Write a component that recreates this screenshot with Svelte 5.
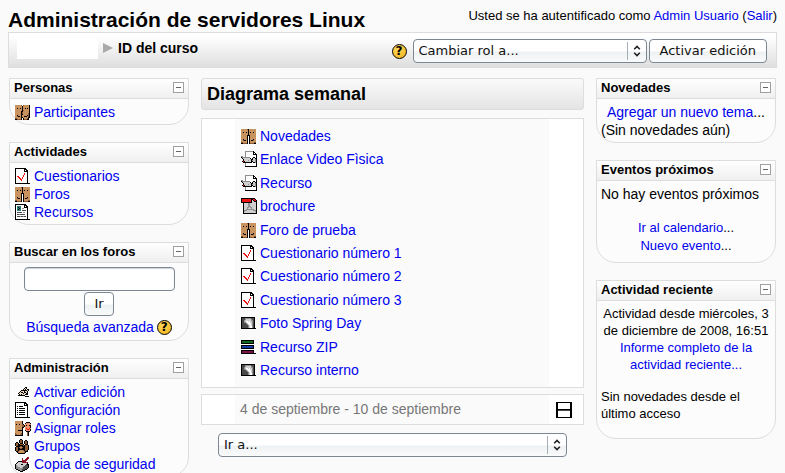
<script>
  const palette = {
    k: '#000000', b: '#c9935f', d: '#8a5a34', l: '#efd9b8', w: '#ffffff',
    r: '#ee1111', m: '#8c1420', g: '#8f8f8f', s: '#cfcfcf', x: '#4a4a4a',
    t: '#2d7f77', v: '#116a1c', u: '#1238a8', p: '#7a1248', o: '#e8946c', n: '#8f5c33'
  };

  const maps = {
    forum: [
      'bbbbbbdkbbbbbbb',
      'bbbbbbbkbbbbbbb',
      'bbbbbbbkbbbbbbb',
      'bbkbbkbkbkbbkbb',
      'bbbbbbbkbbbbbbb',
      'bbbbbbbkbbbbbbb',
      'bbbbbbkkkbbbbbb',
      'bbbbbbkwkbbbbbb',
      'bbbbbbkwkbbbbbb',
      'bbbbbbkwkbbbbbb',
      'bbkbbbkwkbbbkbb',
      'bbdkkbkwkbkkdbb',
      'bbbbbbkwkbbbbbb',
      'ddbbbbkwkbbbbdd',
      'kkddddkwkddddkk'
    ],
    users: [
      'bbbbbbdwdbbbbbk',
      'bbbbbbbkbbbbbbk',
      'bbbbbbbkbbbbbbk',
      'bbkbbkbkbbkbkbk',
      'bbbbbbbkbbbbbbk',
      'bbbbbbbkdbbbbbk',
      'bbbbbbkkbbbbbbk',
      'bbbbbbkdbbbbbbk',
      'bbbbbbkdbbbbbdk',
      'bbbbbbkkbbbbbdk',
      'bbkbbbkbbbbbkdk',
      'bbdkkbkbbkkkbdk',
      'bbbbbbkkbbbbbkk',
      'ddbbbbkwkbbbdkw',
      'kkddddkwkdddkkw'
    ],
    quiz: [
      'kkkkkkkkkkk....',
      'kwwwwwwwwkkk...',
      'kwwwwwwwwkwkk..',
      'kwwwwwwwwkkkk..',
      'kwwwwwwwwwwwk..',
      'kwwwwwwwwrwwk..',
      'kwwwwwwwwrwwk..',
      'kwwwwwwwrwwwk..',
      'kwrrwwwwrwwwk..',
      'kwwrrwwrwwwwk..',
      'kwwwrrwrwwwwk..',
      'kwwwwrrwwwwwk..',
      'kwwwwwrwwwwwk..',
      'kwwwwwwwwwwwk..',
      'kwwwwwwwwwwwk..',
      'kkkkkkkkkkkkkkk'
    ],
    resource: [
      'kkkkkkkkkkk....',
      'kwwwwwwwwkkk...',
      'kwttttwwwkwkk..',
      'kwtkttwwwkkkk..',
      'kwttktwggwwwk..',
      'kwtkttwwwwwwk..',
      'kwttttwxxxxwk..',
      'kwwwwwwwwwwwk..',
      'kwxxxxxwggwwk..',
      'kwwwwwwwwwwwk..',
      'kwxxgxxxxxwwk..',
      'kwwwwwwwwwwwk..',
      'kwxxxgxxgxxwk..',
      'kwwwwwwwwwwwk..',
      'kwwwwwwwwwwwk..',
      'kkkkkkkkkkkkkkk'
    ],
    settings: [
      'kkkkkkkkkkk....',
      'kwwwwwwwwkkk...',
      'kwwwwwwwwkwkk..',
      'kwwwwwwwwkkkk..',
      'kwkwkkkkwwwwk..',
      'kwwwwwwwwwwwk..',
      'kwkwkkkkkkwwk..',
      'kwwwwwwwwwwwk..',
      'kwkwkkkkkkwwk..',
      'kwwwwwwwwwwwk..',
      'kwkwkkkkkkwwk..',
      'kwwwwwwwwwwwk..',
      'kwkwkkkkkkwwk..',
      'kwwwwwwwwwwwk..',
      'kwwwwwwwwwwwk..',
      'kkkkkkkkkkkkkkk'
    ],
    video: [
      '....ggggggggk...',
      '....gwwwwwwwkk..',
      '....gwwwwwwwkwk.',
      '....gwwwwwwwkkkk',
      '....gwwwwwwwwwwk',
      'gg..gwwwwwwwwwwk',
      'kggggggggwwwkkwk',
      '.kssssssskwksskk',
      '..kssssssskkssgk',
      '..kssssgsskgssgk',
      '.krksssssskkssgk',
      '..kkkkkkkkkwkkgk',
      '....gwwwwwwwwwwk',
      '....gwwwwwwwwwwk',
      '....gwwwwwwwwwwk',
      '....kkkkkkkkkkkk'
    ],
    pdf: [
      'kkkkkkkkkkkkkk..',
      'krrrrrrrrrkkrrk.',
      'krrrrrrrrrkskrrk',
      'krrrrrrrrrksskkk',
      'kkkkkkkkkkkssssk',
      '..kssssggssssssk',
      '..kssssggssssssk',
      '..kssssggssssssk',
      '..kssssgggsssssk',
      '..ksssggsggssssk',
      '..ksssgsssgssssk',
      '..kssggggggggssk',
      '..kgggssssssgggk',
      '..kgssssssssssgk',
      '..kssssssssssssk',
      '..kkkkkkkkkkkkkk'
    ],
    photo: [
      'kkkkkkkkkkkkkk.',
      'kxxxggggggxxxk.',
      'kxxxgsssssgxxk.',
      'kxxgssssssggxk.',
      'kxxgswwswssgxk.',
      'kxxggswwwssgxk.',
      'kxxxxgswwwsgxk.',
      'kxxxxxgswwsgxk.',
      'kxxxxxxgswsgxk.',
      'kxxxxxxgswwgxk.',
      'kxxxxxxgswwgxk.',
      'kkkkkkkkkkkkkkk'
    ],
    zip: [
      'kkkkkkkkkkkkk..',
      'kvvvvvvvvvvvk..',
      'kvvvvvvvvvvvk..',
      'kkkkkkkkkkkkk..',
      '...............',
      'kkkkkkkkkkkkk..',
      'kuuuuuuuuuuuk..',
      'kuuuuuuuuuuuk..',
      'kkkkkkkkkkkkk..',
      '...............',
      'kkkkkkkkkkkkk..',
      'kpppppppppppk..',
      'kpppppppppppk..',
      'kkkkkkkkkkkkkkk'
    ],
    edit: [
      '.......kk..',
      '......klk..',
      '.....klk.kk',
      '...kkkkkklk',
      '..klllkllk.',
      '.klkklkklk.',
      'kllllkllkk.',
      '.klklllkkk.',
      'kkkkkkk....',
      '.......kkkk'
    ],
    roles: [
      'bbbbbbbk........',
      'bbbbbbbk...kkkk.',
      'bbbbbbbk..kooook',
      'bkbbkbbdk.oooooo',
      'bbbbbbbddkokookk',
      'bbbbbbbddkoooook',
      'bbbbbbbkk.oooook',
      'bbbbbbbk..orooro',
      'bbbbbbbk..oorrok',
      'bbbkkkkk..kooook',
      'bbbbbbbk...kkkk.',
      'bbbbbbbk....nk..',
      'dbbbbbdk....nk..',
      'ddbbbddk....nk..',
      'kkkkkkkk....nk..'
    ],
    groups: [
      '.....kk........',
      '....knnk..kk...',
      '....knnk.knnk..',
      '.kk.knnk.knnk..',
      'knnk.kkk.knnk..',
      'knnkknnnk.kkk..',
      'knnkkkkknknnnk.',
      '.kkkknnkkknnnk.',
      'knnknbbnkknnnk.',
      'knnkknnkkknnnk.',
      'knnkkkkkkknnnk.',
      'knnknbbbnknnk..',
      '.kknbbbbbnkkk..',
      '..knbbbbbnk....',
      '...kkkkkkk.....'
    ],
    backup: [
      '............mm.',
      '.......m...mmm.',
      '.......m..mmm..',
      '.......mmmmm...',
      '...kkkkmmmm....',
      '..kssssmmmmmm..',
      '.kssssssssssk..',
      'kssssskksssxkk.',
      'kgssssssssxxxk.',
      'kggsssssgxxxxk.',
      'kggggssgxxxxxk.',
      'kgggggggxxxxk..',
      '.kkggggxxxkk...',
      '...kkggxkk.....',
      '.....kkk.......'
    ],
    one: [
      'kkkkkkkkkkkkkkkk',
      'kkwwwwwwwwwwwwkk',
      'kkwwwwwwwwwwwwkk',
      'kkwwwwwwwwwwwwkk',
      'kkwwwwwwwwwwwwkk',
      'kkwwwwwwwwwwwwkk',
      'kkwwwwwwwwwwwwkk',
      'kkkkkkkkkkkkkkkk',
      'kkxxxxxxxxxxxxkk',
      'kkwwwwwwwwwwwwkk',
      'kkwwwwwwwwwwwwkk',
      'kkwwwwwwwwwwwwkk',
      'kkwwwwwwwwwwwwkk',
      'kkwwwwwwwwwwwwkk',
      'kkwwwwwwwwwwwwkk',
      'kkkkkkkkkkkkkkkk'
    ]
  };

  // Merge equal neighbours of each row into one rectangle.
  function runs(rows) {
    const out = [];
    rows.forEach((row, y) => {
      let x = 0;
      while (x < row.length) {
        let end = x + 1;
        while (end < row.length && row[end] === row[x]) end++;
        if (row[x] !== '.') out.push({ x, y, w: end - x, c: palette[row[x]] });
        x = end;
      }
    });
    return out;
  }

  const activities = [
    ['quiz', 'Cuestionarios'],
    ['forum', 'Foros'],
    ['resource', 'Recursos']
  ];
  const admin = [
    ['edit', 'Activar edición'],
    ['settings', 'Configuración'],
    ['roles', 'Asignar roles'],
    ['groups', 'Grupos'],
    ['backup', 'Copia de seguridad']
  ];
  const topics = [
    ['forum', 'Novedades'],
    ['video', 'Enlace Video Fìsica'],
    ['video', 'Recurso'],
    ['pdf', 'brochure'],
    ['forum', 'Foro de prueba'],
    ['quiz', 'Cuestionario número 1'],
    ['quiz', 'Cuestionario número 2'],
    ['quiz', 'Cuestionario número 3'],
    ['photo', 'Foto Spring Day'],
    ['zip', 'Recurso ZIP'],
    ['photo', 'Recurso interno']
  ];
</script>

{#snippet icon(name)}
  <svg class="icon" viewBox="0 0 16 16" aria-hidden="true" shape-rendering="crispEdges">
    <g transform={`translate(${name === 'edit' ? 3 : 0} ${Math.ceil((16 - maps[name].length) / 2)})`}>
      {#each runs(maps[name]) as r}
        <rect x={r.x} y={r.y} width={r.w} height="1" fill={r.c} />
      {/each}
    </g>
  </svg>
{/snippet}

{#snippet links(items)}
  <ul class="links">
    {#each items as [name, label]}
      <li>{@render icon(name)}<a href="#top">{label}</a></li>
    {/each}
  </ul>
{/snippet}

{#snippet head(title)}
  <header class="block-head">
    <h2>{title}</h2>
    <button class="toggle" type="button" aria-label={`Ocultar ${title}`}></button>
  </header>
{/snippet}

{#snippet arrows()}
  <span class="arrows" aria-hidden="true">
    <svg viewBox="0 0 8 12" width="8" height="12" fill="none" stroke="#222" stroke-width="1.6">
      <path d="M1.2 4.2 4 1.4l2.8 2.8M1.2 7.8 4 10.6l2.8-2.8" />
    </svg>
  </span>
{/snippet}

<div class="page" id="top">
  <div class="top">
    <h1>Administración de servidores Linux</h1>
    <p class="login">Usted se ha autentificado como <a href="#top">Admin Usuario</a> (<a href="#top">Salir</a>)</p>
  </div>

  <div class="navbar">
    <nav class="crumbs">
      <span class="site"></span>
      <svg viewBox="0 0 10 10" width="10" height="10" aria-hidden="true"><path d="M0 0 10 5 0 10z" fill="#a9a9a9" /></svg>
      <strong>ID del curso</strong>
    </nav>
    <div class="tools">
      <button class="help" type="button" aria-label="Ayuda sobre roles">?</button>
      <div class="picker role">
        <select aria-label="Cambiar rol"><option>Cambiar rol a...</option></select>
        {@render arrows()}
      </div>
      <button class="btn edit" type="button">Activar edición</button>
    </div>
  </div>

  <div class="columns">
    <aside class="side">
      <section class="block">
        {@render head('Personas')}
        <div class="body">{@render links([['users', 'Participantes']])}</div>
      </section>
      <section class="block">
        {@render head('Actividades')}
        <div class="body">{@render links(activities)}</div>
      </section>
      <section class="block">
        {@render head('Buscar en los foros')}
        <form class="body search">
          <input type="text" aria-label="Buscar en los foros" />
          <button class="btn go" type="button">Ir</button>
          <div class="advanced">
            <a href="#top">Búsqueda avanzada</a>
            <button class="help" type="button" aria-label="Ayuda sobre la búsqueda">?</button>
          </div>
        </form>
      </section>
      <section class="block">
        {@render head('Administración')}
        <div class="body">{@render links(admin)}</div>
      </section>
    </aside>

    <main>
      <h2 class="outline">Diagrama semanal</h2>
      <section class="week">
        <div class="content topics">{@render links(topics)}</div>
        <div></div>
      </section>
      <section class="week">
        <div class="content dates">4 de septiembre - 10 de septiembre</div>
        <a class="one" href="#top" aria-label="Mostrar sólo esta semana">{@render icon('one')}</a>
      </section>
      <div class="picker jump">
        <select aria-label="Ir a"><option>Ir a...</option></select>
        {@render arrows()}
      </div>
    </main>

    <aside class="side">
      <section class="block">
        {@render head('Novedades')}
        <div class="body">
          <p class="center"><a href="#top">Agregar un nuevo tema</a>...</p>
          <p>(Sin novedades aún)</p>
        </div>
      </section>
      <section class="block">
        {@render head('Eventos próximos')}
        <div class="body events">
          <p>No hay eventos próximos</p>
          <p class="center small"><a href="#top">Ir al calendario</a>...<br /><a href="#top">Nuevo evento</a>...</p>
        </div>
      </section>
      <section class="block">
        {@render head('Actividad reciente')}
        <div class="body recent">
          <p class="center">Actividad desde miércoles, 3<br />de diciembre de 2008, 16:51<br /><a href="#top">Informe completo de la<br />actividad reciente...</a></p>
          <p>Sin novedades desde el<br />último acceso</p>
        </div>
      </section>
    </aside>
  </div>
</div>

<style>
  :global(body) {
    background: #fafafa;
  }
  .page {
    box-sizing: border-box;
    height: 100vh;
    overflow: hidden;
    padding: 8px 8px 0;
    font: 14px/18px 'Liberation Sans', Arial, sans-serif;
    color: #000;
  }
  h1, h2, p, ul {
    margin: 0;
    padding: 0;
  }
  a {
    color: #0000ee;
    text-decoration: none;
  }
  .top {
    display: flex;
    justify-content: space-between;
  }
  h1 {
    font-size: 21px;
    line-height: 24px;
  }
  .login {
    font-size: 13px;
    line-height: 16px;
  }
  .navbar {
    display: flex;
    justify-content: space-between;
    box-sizing: border-box;
    min-height: 36px;
    padding: 6px 9px 0 8px;
    border: 1px solid #ddd;
    background: linear-gradient(#fff 10%, #dfdfdf);
  }
  .crumbs {
    display: flex;
    align-items: center;
    gap: 5px;
    height: 18px;
  }
  .site {
    align-self: flex-start;
    width: 81px;
    height: 20px;
    background: #fff;
  }
  .tools {
    display: flex;
    align-items: center;
    gap: 2px;
    height: 24px;
  }
  .role {
    width: 234px;
    margin-left: 4px;
  }
  .btn,
  select,
  input {
    box-sizing: border-box;
    height: 24px;
    margin: 0;
    border: 1px solid #7c8794;
    border-radius: 4px;
    background: linear-gradient(#fff 50%, #eef1f3 55%, #fafbfb);
    font: 13px/18px 'DejaVu Sans', sans-serif;
    color: #111;
  }
  .btn {
    padding: 0 10px;
  }
  .go {
    padding: 0 9px;
  }
  .picker {
    position: relative;
  }
  select {
    display: block;
    appearance: none;
    width: 100%;
    padding: 0 24px 0 5px;
  }
  .arrows {
    position: absolute;
    top: 3px;
    right: 1px;
    display: flex;
    align-items: center;
    justify-content: center;
    width: 18px;
    height: 18px;
    border-left: 1px solid #a5adb6;
    pointer-events: none;
  }
  .help {
    box-sizing: border-box;
    width: 15px;
    height: 15px;
    flex: none;
    padding: 0;
    border: 1px solid #000;
    border-radius: 50%;
    background: radial-gradient(circle at 35% 30%, #ffdb5c, #f0ae18);
    font: bold 12px/13px 'DejaVu Sans', sans-serif;
    color: #000;
  }
  .columns {
    display: grid;
    grid-template-columns: 180px minmax(0, 1fr) 180px;
    column-gap: 12px;
    padding: 10px 1px 0;
  }
  .side {
    display: flex;
    flex-direction: column;
    gap: 17px;
  }
  .block {
    border: 1px solid #ddd;
    border-radius: 0 0 20px 20px;
    background: #fcfcfc;
  }
  .block-head {
    display: flex;
    align-items: flex-start;
    justify-content: space-between;
    height: 19px;
    padding: 0 4px;
    border-bottom: 1px solid #ddd;
    background: linear-gradient(#fff, #efefef);
  }
  .block-head h2 {
    font-size: 13px;
    line-height: 17px;
  }
  .toggle {
    box-sizing: border-box;
    width: 11px;
    height: 11px;
    margin-top: 3px;
    padding: 0;
    border: 1px solid #a0a0a0;
    background: linear-gradient(#666, #666) center / 5px 1px no-repeat #fff;
  }
  .body {
    padding: 4px 4px 3px;
  }
  .links {
    list-style: none;
  }
  .links li {
    display: flex;
    align-items: center;
    gap: 3px;
    height: 18px;
    padding-left: 1px;
  }
  .icon {
    width: 16px;
    height: 16px;
    flex: none;
  }
  .search {
    display: flex;
    flex-direction: column;
    align-items: center;
    gap: 1px;
  }
  .search input {
    width: 151px;
    background: #fff;
    box-shadow: inset 0 1px 1px #cfd4d9;
  }
  .advanced {
    display: flex;
    align-items: center;
    gap: 3px;
    height: 20px;
  }
  .center {
    text-align: center;
  }
  .small {
    margin-top: 16px;
    font-size: 13px;
  }
  .events {
    padding-bottom: 7px;
  }
  .recent {
    display: flex;
    flex-direction: column;
    gap: 15px;
    padding-bottom: 16px;
    font-size: 13px;
    line-height: 17px;
  }
  main {
    display: flex;
    flex-direction: column;
    gap: 6px;
  }
  .outline {
    margin: 0 0 2px;
    padding: 6px 5px;
    border: 1px solid #ddd;
    border-radius: 3px;
    background: linear-gradient(#fafafa, #e4e4e4);
    font-size: 18px;
    line-height: 18px;
  }
  .week {
    display: grid;
    grid-template-columns: 1fr 34px;
    padding-left: 33px;
    border: 1px solid #ddd;
    background: #fff;
  }
  .content {
    background: #fafafa;
    padding: 0 5px;
  }
  .topics {
    padding: 8px 5px;
  }
  .topics .links {
    display: flex;
    flex-direction: column;
    justify-content: space-between;
    min-height: 252px;
  }
  .dates {
    color: #777;
    line-height: 29px;
  }
  .one {
    display: flex;
    align-items: center;
    padding-left: 7px;
  }
  .jump {
    margin: 2px 17px 0;
  }
</style>
